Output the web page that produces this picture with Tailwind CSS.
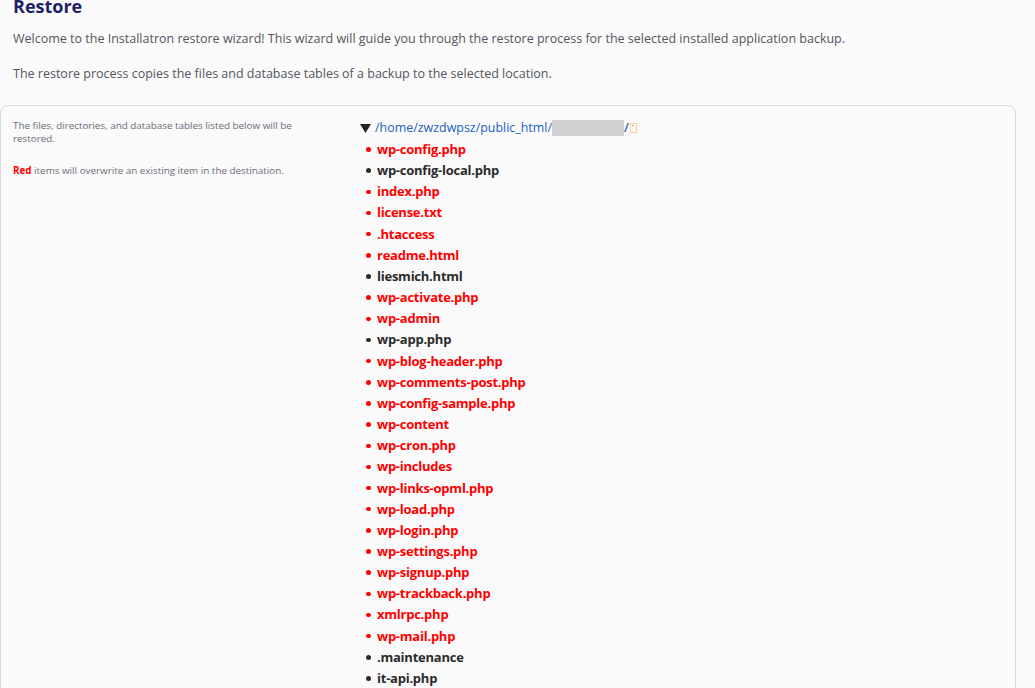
<!DOCTYPE html>
<html lang="en">
<head>
    <meta charset="UTF-8">
    <title>Restore</title>
    <script src="https://cdn.jsdelivr.net/npm/@tailwindcss/browser@4"></script>
</head>
<body class="bg-[#fafafa] h-[688px] overflow-hidden font-['Open_Sans',sans-serif] text-[#54565f]">
    <div class="mt-[-7px]">
        <h1 class="ml-[13px] text-[18px] leading-[26px] font-bold text-[#1d1f6b]">Restore</h1>
        <p class="ml-[13px] mt-[11px] text-[12.5px] leading-[18px]">Welcome to the Installatron restore wizard! This wizard will guide you through the restore process for the selected installed application backup.</p>
        <p class="ml-[13px] mt-[17px] text-[12.5px] leading-[18px]">The restore process copies the files and database tables of a backup to the selected location.</p>

        <div class="mt-[22px] w-[1016px] border border-[#d8dae3] rounded-[8px] flex shadow-[0_-1px_0_#ffffff] h-[800px]">
            <div class="w-[359px] shrink-0 pl-[12px] pt-[13px] text-[9.85px] leading-[13px] text-[#6b6d78]">
                <p class="w-[300px]">The files, directories, and database tables listed below will be restored.</p>
                <p class="mt-[19px]"><b class="text-[#ff0000]">Red</b> items will overwrite an existing item in the destination.</p>
            </div>
            <div class="pt-[13px]">
                <div class="flex items-center h-[18px] text-[12.45px] text-[#1c5fc0]">
                    <svg class="mr-[4px]" width="11" height="9" viewBox="0 0 11 9"><polygon points="0,0 11,0 5.5,9" fill="#222222"/></svg>
                    <span>/home/zwzdwpsz/public_html/</span>
                    <span class="w-[72px] h-[16px] bg-[#d1d1d3]"></span>
                    <span class="font-semibold">/</span>
                    <svg class="ml-[1px]" width="7" height="10" viewBox="0 0 7 10" fill="none"><rect x="0.5" y="0.5" width="6" height="9" stroke="#fbd09a"/><rect x="2" y="2" width="2" height="1" fill="#e0a868"/></svg>
                </div>
                <ul class="mt-[2px] text-[13px] tracking-[-0.24px] leading-[21.15px] font-bold text-[#2b2b2b]">
                    <li class="flex items-center text-[#ff0000]"><span class="w-[4.5px] h-[4.5px] rounded-full bg-current ml-[6px] mr-[6.5px]"></span>wp-config.php</li>
                    <li class="flex items-center"><span class="w-[4.5px] h-[4.5px] rounded-full bg-current ml-[6px] mr-[6.5px]"></span>wp-config-local.php</li>
                    <li class="flex items-center text-[#ff0000]"><span class="w-[4.5px] h-[4.5px] rounded-full bg-current ml-[6px] mr-[6.5px]"></span>index.php</li>
                    <li class="flex items-center text-[#ff0000]"><span class="w-[4.5px] h-[4.5px] rounded-full bg-current ml-[6px] mr-[6.5px]"></span>license.txt</li>
                    <li class="flex items-center text-[#ff0000]"><span class="w-[4.5px] h-[4.5px] rounded-full bg-current ml-[6px] mr-[6.5px]"></span>.htaccess</li>
                    <li class="flex items-center text-[#ff0000]"><span class="w-[4.5px] h-[4.5px] rounded-full bg-current ml-[6px] mr-[6.5px]"></span>readme.html</li>
                    <li class="flex items-center"><span class="w-[4.5px] h-[4.5px] rounded-full bg-current ml-[6px] mr-[6.5px]"></span>liesmich.html</li>
                    <li class="flex items-center text-[#ff0000]"><span class="w-[4.5px] h-[4.5px] rounded-full bg-current ml-[6px] mr-[6.5px]"></span>wp-activate.php</li>
                    <li class="flex items-center text-[#ff0000]"><span class="w-[4.5px] h-[4.5px] rounded-full bg-current ml-[6px] mr-[6.5px]"></span>wp-admin</li>
                    <li class="flex items-center"><span class="w-[4.5px] h-[4.5px] rounded-full bg-current ml-[6px] mr-[6.5px]"></span>wp-app.php</li>
                    <li class="flex items-center text-[#ff0000]"><span class="w-[4.5px] h-[4.5px] rounded-full bg-current ml-[6px] mr-[6.5px]"></span>wp-blog-header.php</li>
                    <li class="flex items-center text-[#ff0000]"><span class="w-[4.5px] h-[4.5px] rounded-full bg-current ml-[6px] mr-[6.5px]"></span>wp-comments-post.php</li>
                    <li class="flex items-center text-[#ff0000]"><span class="w-[4.5px] h-[4.5px] rounded-full bg-current ml-[6px] mr-[6.5px]"></span>wp-config-sample.php</li>
                    <li class="flex items-center text-[#ff0000]"><span class="w-[4.5px] h-[4.5px] rounded-full bg-current ml-[6px] mr-[6.5px]"></span>wp-content</li>
                    <li class="flex items-center text-[#ff0000]"><span class="w-[4.5px] h-[4.5px] rounded-full bg-current ml-[6px] mr-[6.5px]"></span>wp-cron.php</li>
                    <li class="flex items-center text-[#ff0000]"><span class="w-[4.5px] h-[4.5px] rounded-full bg-current ml-[6px] mr-[6.5px]"></span>wp-includes</li>
                    <li class="flex items-center text-[#ff0000]"><span class="w-[4.5px] h-[4.5px] rounded-full bg-current ml-[6px] mr-[6.5px]"></span>wp-links-opml.php</li>
                    <li class="flex items-center text-[#ff0000]"><span class="w-[4.5px] h-[4.5px] rounded-full bg-current ml-[6px] mr-[6.5px]"></span>wp-load.php</li>
                    <li class="flex items-center text-[#ff0000]"><span class="w-[4.5px] h-[4.5px] rounded-full bg-current ml-[6px] mr-[6.5px]"></span>wp-login.php</li>
                    <li class="flex items-center text-[#ff0000]"><span class="w-[4.5px] h-[4.5px] rounded-full bg-current ml-[6px] mr-[6.5px]"></span>wp-settings.php</li>
                    <li class="flex items-center text-[#ff0000]"><span class="w-[4.5px] h-[4.5px] rounded-full bg-current ml-[6px] mr-[6.5px]"></span>wp-signup.php</li>
                    <li class="flex items-center text-[#ff0000]"><span class="w-[4.5px] h-[4.5px] rounded-full bg-current ml-[6px] mr-[6.5px]"></span>wp-trackback.php</li>
                    <li class="flex items-center text-[#ff0000]"><span class="w-[4.5px] h-[4.5px] rounded-full bg-current ml-[6px] mr-[6.5px]"></span>xmlrpc.php</li>
                    <li class="flex items-center text-[#ff0000]"><span class="w-[4.5px] h-[4.5px] rounded-full bg-current ml-[6px] mr-[6.5px]"></span>wp-mail.php</li>
                    <li class="flex items-center"><span class="w-[4.5px] h-[4.5px] rounded-full bg-current ml-[6px] mr-[6.5px]"></span>.maintenance</li>
                    <li class="flex items-center"><span class="w-[4.5px] h-[4.5px] rounded-full bg-current ml-[6px] mr-[6.5px]"></span>it-api.php</li>
                </ul>
            </div>
        </div>
    </div>
</body>
</html>
